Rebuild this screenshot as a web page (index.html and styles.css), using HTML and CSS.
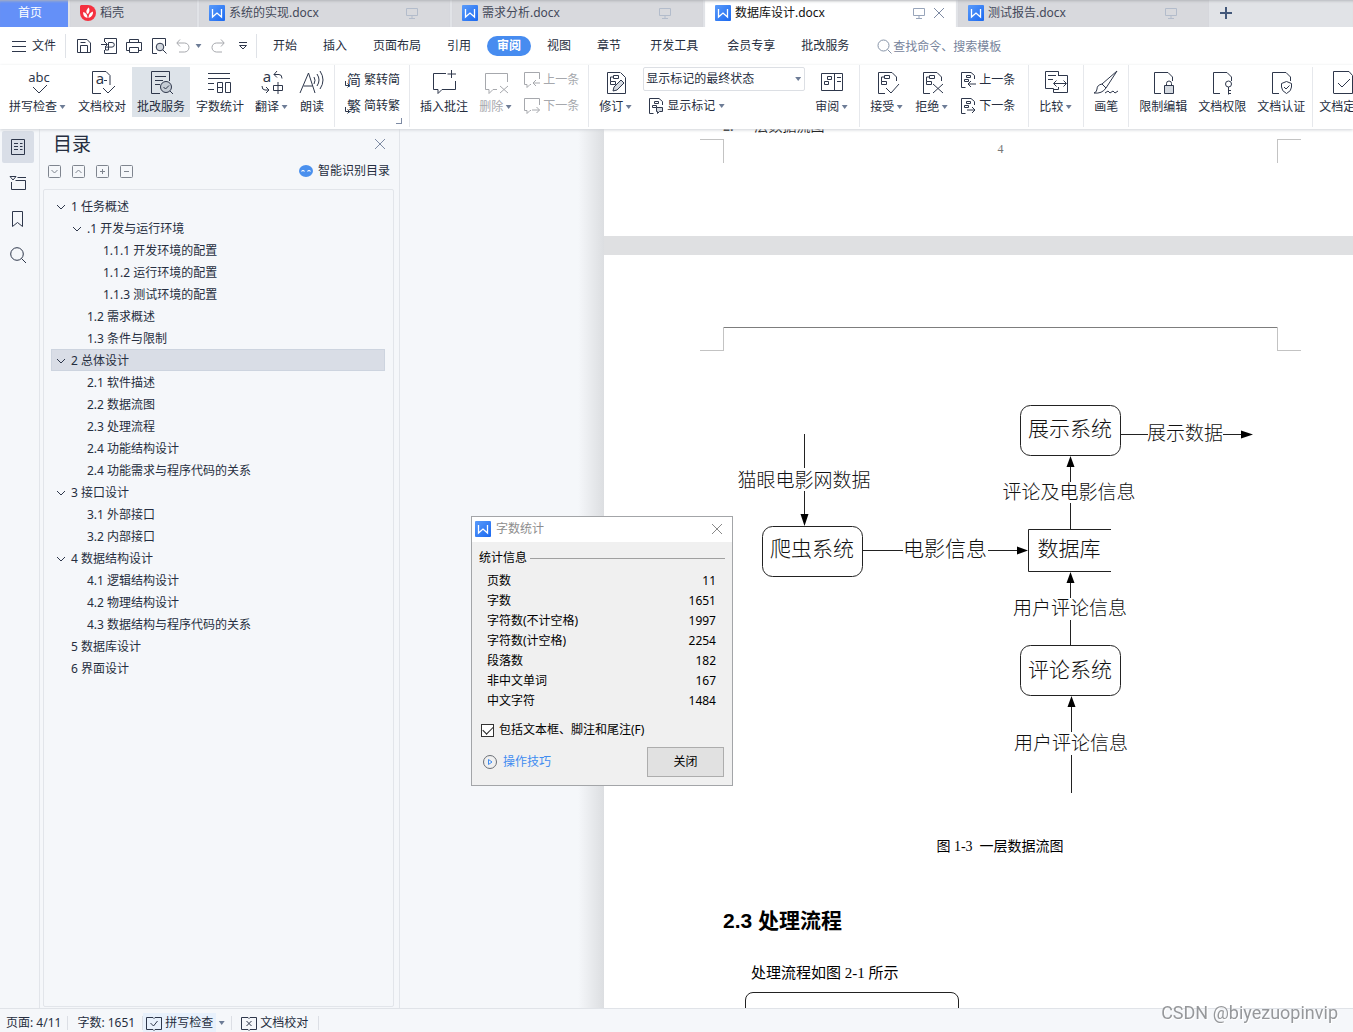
FILE: index.html
```html
<!DOCTYPE html>
<html lang="zh-CN">
<head>
<meta charset="utf-8">
<title>数据库设计.docx</title>
<link rel="stylesheet" href="styles.css">
</head>
<body>
<svg class="defs" width="0" height="0" aria-hidden="true">
  <defs>
    <linearGradient id="wg" x1="0" y1="0" x2="1" y2="1"><stop offset="0" stop-color="#5a9bfa"/><stop offset="1" stop-color="#1a68f0"/></linearGradient>
  </defs>
  <symbol id="w" viewBox="0 0 16 16"><rect width="16" height="16" rx="1" fill="url(#wg)"/><path d="M3.5 4v8l4.5-4 4.5 4V4" fill="none" stroke="#fff" stroke-width="1.3"/></symbol>
  <symbol id="screen" viewBox="0 0 12 12"><path d="M.5 1.500h11v7H.5zM6 8.500v3M3 11.500h6"/></symbol>
  <symbol id="close" viewBox="0 0 12 12"><path d="M1 1l10 10M11 1L1 11"/></symbol>
  <symbol id="page" viewBox="0 0 26 26"><path d="M11 24.500H4.500v-21H18l4.500 4.500v4"/></symbol>
  <symbol id="marks" viewBox="0 0 26 26"><path d="M10.500 6.500h5v3h-5zM7.500 12.500h5v3h-5zM10.500 8h-3v4.500"/></symbol>
  <symbol id="chev" viewBox="0 0 10 10"><path d="M1 3l4 4 4-4"/></symbol>
  <symbol id="markdoc" viewBox="0 0 16 16"><path d="M5.500 15.500h-4v-15h9.500l3.500 3v3.500M6.500 3.500h4v2h-4zM4.500 7.500h4v2h-4z"/></symbol>
  <symbol id="bubble" viewBox="0 0 16 16"><path d="M15.500 7V.5H.5v12H3v3l3-3h1"/></symbol>
</svg>

<nav class="tabs" aria-label="文档标签">
  <button class="tab home">首页</button>
  <button class="tab docer"><svg width="16" height="16" viewBox="0 0 16 16"><path d="M1 0h7a8 8 0 1 1-8 8V1z" fill="#f5303f"/><path d="M7.500 13C3.500 12 3 9 3.200 7 6 7.500 7.500 9.500 7.500 13zM7 8.500C5.500 6 7 4 8.800 2.500 10 5 9.500 7 8 9zM8.500 13c0-3.500 1.500-5.500 4.500-6.500.3 3-1.200 5.700-4.500 6.500z" fill="#fff"/></svg><span>稻壳</span></button>
  <button class="tab doc"><svg width="16" height="16"><use href="#w"/></svg><span>系统的实现.docx</span><svg class="scr" width="12" height="12"><use href="#screen"/></svg></button>
  <button class="tab doc"><svg width="16" height="16"><use href="#w"/></svg><span>需求分析.docx</span><svg class="scr" width="12" height="12"><use href="#screen"/></svg></button>
  <button class="tab doc active"><svg width="16" height="16"><use href="#w"/></svg><span>数据库设计.docx</span><svg class="scr" width="12" height="12"><use href="#screen"/></svg><svg class="x" width="12" height="12"><use href="#close"/></svg></button>
  <button class="tab doc"><svg width="16" height="16"><use href="#w"/></svg><span>测试报告.docx</span><svg class="scr" width="12" height="12"><use href="#screen"/></svg></button>
  <button class="newtab" aria-label="新建"><svg width="12" height="12" viewBox="0 0 12 12"><path d="M6 0v12M0 6h12" stroke="#43587a" stroke-width="2"/></svg></button>
</nav>

<nav class="menu" aria-label="菜单">
  <button class="file"><svg class="ic" width="14" height="12" viewBox="0 0 14 12"><path d="M0 1.500h14M0 6.500h14M0 11.500h14"/></svg>文件</button>
  <i class="vsep"></i>
  <div class="quick">
    <button aria-label="保存"><svg class="ic" width="16" height="16" viewBox="0 0 16 16"><path d="M1.500 1.500h9.500l3.500 3.500v9.500h-13zM4.500 14.500v-7h7v7M4.500 4.500h5"/></svg></button>
    <button aria-label="输出为PDF"><svg class="ic" width="16" height="16" viewBox="0 0 16 16"><path d="M3.500 4V.5h12v15h-12V12M0 6.500h6M4 4l2.500 2.500L4 9M7.500 12V4.500h3.500a2.300 2.300 0 0 1 0 4.600H4.500V12h3"/></svg></button>
    <button aria-label="打印"><svg class="ic" width="16" height="16" viewBox="0 0 16 16"><path d="M3.500 4.500v-3h9v3M3.500 12.500h-3v-8h15v8h-3M3.500 9.500h9v5h-9z"/></svg></button>
    <button aria-label="打印预览"><svg class="ic" width="16" height="16" viewBox="0 0 16 16"><path d="M6 15.500H1.500V.5h13V8M12 12l3.500 3.500"/><circle cx="9" cy="9" r="3.800" fill="#d4d9e0"/></svg></button>
    <button class="dim" aria-label="撤销"><svg class="ic" width="14" height="14" viewBox="0 0 14 14"><path d="M4 .5L.8 4 4 7.500M1 4h7.500a4.500 4.500 0 0 1 0 9H3"/></svg><b class="dd"></b></button>
    <button class="dim" aria-label="恢复"><svg class="ic" width="14" height="14" viewBox="0 0 14 14"><path d="M10 .5L13.200 4 10 7.500M13 4H5.500a4.500 4.500 0 0 0 0 9H11"/></svg></button>
    <button aria-label="更多"><svg class="ic" width="8" height="8" viewBox="0 0 8 8"><path d="M0 .5h8M.5 3.500L4 7l3.500-3.500z"/></svg></button>
  </div>
  <i class="vsep"></i>
  <div class="items">
    <button>开始</button><button>插入</button><button>页面布局</button><button>引用</button><button class="on">审阅</button><button>视图</button><button>章节</button><button class="wide">开发工具</button><button>会员专享</button><button>批改服务</button>
  </div>
  <label class="find"><svg width="15" height="15" viewBox="0 0 15 15"><circle cx="6.500" cy="6.500" r="5.500"/><path d="M10.500 10.500L14.500 14.500"/></svg><input type="text" placeholder="查找命令、搜索模板" aria-label="查找命令"></label>
</nav>

<div class="ribbon" role="toolbar" aria-label="审阅">
  <button class="big"><svg class="ic" width="26" height="26" viewBox="0 0 26 26"><text x="14" y="13" class="tabc">abc</text><path d="M8 18l6 6 8-8"/></svg><span>拼写检查<b class="dd"></b></span></button>
  <button class="big"><svg class="ic" width="26" height="26" viewBox="0 0 26 26"><path d="M12 24.500H3.500v-22H17l4 4V16M14 19l5 5 7-7M15 11.500h3"/><text x="11" y="15" class="ta">a</text></svg><span>文档校对</span></button>
  <button class="big on"><svg class="ic" width="26" height="26" viewBox="0 0 26 26"><path d="M12 24.500H3.500v-22h18V12M7 7.500h11M7 11.500h8M7 15.500h5M22 22l3 3"/><circle cx="18" cy="18" r="5.500" fill="#c5ccd5"/><path d="M15.500 18l2 2 3.500-3.500"/></svg><span>批改服务</span></button>
  <button class="big"><svg class="ic" width="26" height="26" viewBox="0 0 26 26"><path d="M1 4.500h22M1 9.500h22M1 14.500h6M1 20.500h6M10.500 13.500h5v10h-5zM10.500 18.500h5M18.500 13.500h5v10h-5z"/></svg><span>字数统计</span></button>
  <button class="big"><svg class="ic" width="26" height="26" viewBox="0 0 26 26"><text x="8" y="13" class="ta">a</text><path d="M18 2l-3 3.500 3 3M15 5.500h5q3 0 3 4M7 18l3 3-3 3M10 21H6q-3 0-3-4M14.500 16.500h9v5h-9zM19 13v12"/></svg><span>翻译<b class="dd"></b></span></button>
  <button class="big"><svg class="ic" width="26" height="26" viewBox="0 0 26 26"><path d="M1 24L9.500 4 16 24M4.500 17h9M15 8q2 3 0 7M18 5q4 6 0 12M21 2q6 9 0 18"/></svg><span>朗读</span></button>
  <i class="gsep"></i>
  <div class="pair">
    <button><svg class="ic" width="16" height="16" viewBox="0 0 16 16"><text x="9" y="13" class="tz">简</text><path d="M.5 9v4.500h4M2.500 11.500l2 2-2 2"/></svg>繁转简</button>
    <button><svg class="ic" width="16" height="16" viewBox="0 0 16 16"><text x="9" y="13" class="tz">繁</text><path d="M.5 9v4.500h4M2.500 11.500l2 2-2 2"/></svg>简转繁</button>
  </div>
  <i class="gsep corner"></i>
  <button class="big"><svg class="ic" width="26" height="26" viewBox="0 0 26 26"><path d="M15 4.500H2.500v16H7v4l4-4h13.500V12M20.500 1v8M16.500 5h8.500"/></svg><span>插入批注</span></button>
  <button class="big dim"><svg class="ic" width="26" height="26" viewBox="0 0 26 26"><path d="M24.500 13V4.500H2.500v16H6v4l4-4h4M17 17l8 7M25 17l-8 7"/></svg><span>删除<b class="dd"></b></span></button>
  <div class="pair dim">
    <button><svg class="ic" width="16" height="16" viewBox="0 0 16 16"><use href="#bubble"/><path d="M16 11H9M12 8l-3 3 3 3"/></svg>上一条</button>
    <button><svg class="ic" width="16" height="16" viewBox="0 0 16 16"><use href="#bubble"/><path d="M8 12h7.500M12.500 9l3 3-3 3"/></svg>下一条</button>
  </div>
  <i class="gsep"></i>
  <button class="big"><svg class="ic" width="26" height="26" viewBox="0 0 26 26"><path d="M17 3.500H4.500v21h18V8.500l-5-5"/><use href="#marks"/><path d="M10 22l1-4 7-7 3 3-7 7z" fill="#d4d9e0"/></svg><span>修订<b class="dd"></b></span></button>
  <div class="marks">
    <select aria-label="显示状态"><option>显示标记的最终状态</option></select>
    <button><svg class="ic" width="16" height="16" viewBox="0 0 16 16"><use href="#markdoc"/><path d="M8.500 9.500h6v4h-3l-2 2v-2h-1z" fill="#d4d9e0"/></svg>显示标记<b class="dd"></b></button>
  </div>
  <button class="big"><svg class="ic" width="26" height="26" viewBox="0 0 26 26"><path d="M2.500 4.500h21v17h-21zM15.500 4.500v17M18 8.500h4M18 12.500h4M8.500 7.500h4v3h-4zM5.500 12.500h4v3h-4z"/></svg><span>审阅<b class="dd"></b></span></button>
  <i class="gsep"></i>
  <button class="big"><svg class="ic" width="26" height="26" viewBox="0 0 26 26"><use href="#page"/><use href="#marks"/><path d="M12 19l5 5 8-9"/></svg><span>接受<b class="dd"></b></span></button>
  <button class="big"><svg class="ic" width="26" height="26" viewBox="0 0 26 26"><use href="#page"/><use href="#marks"/><path d="M14 15l10 9M24 15l-10 9"/></svg><span>拒绝<b class="dd"></b></span></button>
  <div class="pair roomy">
    <button><svg class="ic" width="16" height="16" viewBox="0 0 16 16"><use href="#markdoc"/><path d="M16 12H8M11 9l-3 3 3 3"/></svg>上一条</button>
    <button><svg class="ic" width="16" height="16" viewBox="0 0 16 16"><use href="#markdoc"/><path d="M7 12h8M12 9l3 3-3 3"/></svg>下一条</button>
  </div>
  <i class="gsep"></i>
  <button class="big"><svg class="ic" width="26" height="26" viewBox="0 0 26 26"><path d="M15.500 7V2.500h-13v17h8v4h14v-17h-9M5 6.500h8M5 10.500h5M11 14.500h12M13.500 11.500l-3 3 3 3M20.500 11.500l3 3-3 3M15.500 18v2.500h-5"/></svg><span>比较<b class="dd"></b></span></button>
  <i class="gsep"></i>
  <button class="big"><svg class="ic" width="26" height="26" viewBox="0 0 26 26"><path d="M24 2L9 15l4 4zM9 15q-5 1-5 5 0 3-3 4 8 1 12-5M12 24l3-2 2 2 3-2 2 2 3-2"/></svg><span>画笔</span></button>
  <i class="gsep"></i>
  <button class="big"><svg class="ic" width="26" height="26" viewBox="0 0 26 26"><use href="#page"/><path d="M14.500 16.500h9v8h-9z" fill="#d4d9e0"/><path d="M16.500 16.500v-2a2.500 2.500 0 0 1 5 0v2"/></svg><span>限制编辑</span></button>
  <button class="big"><svg class="ic" width="26" height="26" viewBox="0 0 26 26"><use href="#page"/><circle cx="19.500" cy="15" r="3"/><path d="M19.500 18V25.500M19.500 21.500H22M19.500 24.500H22"/></svg><span>文档权限</span></button>
  <button class="big"><svg class="ic" width="26" height="26" viewBox="0 0 26 26"><use href="#page"/><path d="M18.500 12.500l5 2V18q0 4-5 6.500-5-2.500-5-6.500v-3.500zM16 18l2 2 3.500-3.500"/></svg><span>文档认证</span></button>
  <i class="gsep tight"></i>
  <button class="big"><svg class="ic" width="26" height="26" viewBox="0 0 26 26"><path d="M4 24.500h18.500v-18l-3.500-4H3.500v22M8 14l4 4 8-8"/></svg><span>文档定稿</span></button>
</div>

<main class="work">
  <aside class="rail">
    <button class="on" aria-label="目录"><svg class="ic" width="16" height="16" viewBox="0 0 16 16"><path d="M1.500.5h13v15h-13zM4 4.500h4M10 4.500h2.500M4 7.500h4M10 7.500h2.500M4 10.500h4M10 10.500h2.500"/></svg></button>
    <button aria-label="章节"><svg class="ic" width="16" height="16" viewBox="0 0 16 16"><path d="M0 1.500h6L3 5zM7.500 2.500H16M1.500 7v7.500h14v-9h-10"/></svg></button>
    <button aria-label="书签"><svg class="ic" width="16" height="16" viewBox="0 0 16 16"><path d="M2.500.5h10v15l-5-4-5 4z"/></svg></button>
    <button aria-label="查找"><svg class="ic" width="16" height="16" viewBox="0 0 16 16"><circle cx="7" cy="7" r="6.300"/><path d="M11.500 11.500L16 16"/></svg></button>
  </aside>
  <section class="outline">
    <header><h2>目录</h2><button aria-label="关闭"><svg class="x" width="12" height="12"><use href="#close"/></svg></button></header>
    <div class="tools">
      <button aria-label="展开"><svg width="13" height="13" viewBox="0 0 13 13"><rect x=".5" y=".5" width="12" height="12" rx="1"/><path d="M3.500 5l3 3 3-3"/></svg></button>
      <button aria-label="收起"><svg width="13" height="13" viewBox="0 0 13 13"><rect x=".5" y=".5" width="12" height="12" rx="1"/><path d="M3.500 8l3-3 3 3"/></svg></button>
      <button aria-label="增加级别"><svg width="13" height="13" viewBox="0 0 13 13"><rect x=".5" y=".5" width="12" height="12" rx="1"/><path d="M4 6.500h5M6.500 4v5"/></svg></button>
      <button aria-label="减少级别"><svg width="13" height="13" viewBox="0 0 13 13"><rect x=".5" y=".5" width="12" height="12" rx="1"/><path d="M4 6.500h5"/></svg></button>
      <a href="#toc" class="smart"><svg width="14" height="12" viewBox="0 0 14 12"><ellipse cx="7" cy="6" rx="7" ry="6" fill="#4a90ee"/><path d="M2.500 6.500q1.500-2 3 0M8.500 6.500q1.500-2 3 0" stroke="#fff" stroke-width="1.200" fill="none"/></svg>智能识别目录</a>
    </div>
    <ul class="tree" id="toc">
      <li><svg class="ic" width="10" height="10"><use href="#chev"/></svg>1 任务概述</li>
      <li class="l2"><svg class="ic" width="10" height="10"><use href="#chev"/></svg>.1 开发与运行环境</li>
      <li class="l3 leaf">1.1.1 开发环境的配置</li>
      <li class="l3 leaf">1.1.2 运行环境的配置</li>
      <li class="l3 leaf">1.1.3 测试环境的配置</li>
      <li class="l2 leaf">1.2 需求概述</li>
      <li class="l2 leaf">1.3 条件与限制</li>
      <li class="sel"><svg class="ic" width="10" height="10"><use href="#chev"/></svg>2 总体设计</li>
      <li class="l2 leaf">2.1 软件描述</li>
      <li class="l2 leaf">2.2 数据流图</li>
      <li class="l2 leaf">2.3 处理流程</li>
      <li class="l2 leaf">2.4 功能结构设计</li>
      <li class="l2 leaf">2.4 功能需求与程序代码的关系</li>
      <li><svg class="ic" width="10" height="10"><use href="#chev"/></svg>3 接口设计</li>
      <li class="l2 leaf">3.1 外部接口</li>
      <li class="l2 leaf">3.2 内部接口</li>
      <li><svg class="ic" width="10" height="10"><use href="#chev"/></svg>4 数据结构设计</li>
      <li class="l2 leaf">4.1 逻辑结构设计</li>
      <li class="l2 leaf">4.2 物理结构设计</li>
      <li class="l2 leaf">4.3 数据结构与程序代码的关系</li>
      <li class="leaf">5 数据库设计</li>
      <li class="leaf">6 界面设计</li>
    </ul>
  </section>

  <section class="canvas">
    <article class="sheet prev">
      <p class="tail"><strong>2.</strong>  一层数据流图</p>
      <div class="crops foot"><i></i><span>4</span><i></i></div>
    </article>
    <article class="sheet cur">
      <div class="crops head"><i></i><span></span><i></i></div>
      <svg class="flow" width="554" height="400" viewBox="724 400 554 400">
        <g class="shape">
          <rect x="1020.500" y="405.500" width="100" height="50" rx="10"/>
          <rect x="762.500" y="526.500" width="100" height="50" rx="10"/>
          <rect x="1020.500" y="645.500" width="100" height="50" rx="10"/>
          <path d="M1111 529.500h-82.500v42h82.500"/>
          <path d="M804.500 434v34M804.500 491v26M863 550.500h40M988 550.500h32M1070.500 529v-26M1070.500 482v-18M1121 434.500h27M1223 434.500h20M1070.500 645v-25M1070.500 598v-18M1071.500 793v-38M1071.500 732v-28"/>
        </g>
        <path d="M804.500 526l-4-12h8zM1028 550.500l-11-4v8zM1070.500 456l-4 11h8zM1253 434.500l-12-4v8zM1070.500 572l-4 11h8zM1071.500 696l-4 11h8z"/>
        <g class="node"><text x="1070" y="436">展示系统</text><text x="812" y="556">爬虫系统</text><text x="1070" y="677">评论系统</text><text x="1069" y="556">数据库</text><text x="945" y="556">电影信息</text></g>
        <g class="edge"><text x="804" y="487">猫眼电影网数据</text><text x="1069" y="499">评论及电影信息</text><text x="1185" y="440">展示数据</text><text x="1070" y="615">用户评论信息</text><text x="1071" y="750">用户评论信息</text></g>
      </svg>
      <p class="caption">图 1-3&nbsp; 一层数据流图</p>
      <h3>2.3 处理流程</h3>
      <p class="para">处理流程如图 2-1 所示</p>
      <div class="chartbox"></div>
    </article>
  </section>
</main>

<footer class="status">
  <span>页面: 4/11</span><i></i><span>字数: 1651</span><i class="flush"></i>
  <button class="on"><svg class="ic" width="16" height="16" viewBox="0 0 16 16"><path d="M7 2.500H.5v12H7l1 1 1-1h6.500v-12H9l-1 1zM4.500 8l3 3 4-5"/></svg>拼写检查</button><b class="dd"></b><i></i>
  <button><svg class="ic" width="16" height="16" viewBox="0 0 16 16"><path d="M7 2.500H.5v12H7l1 1 1-1h6.500v-12H9l-1 1zM5.500 6l5 5M10.500 6l-5 5"/></svg>文档校对</button><i></i>
</footer>

<div class="dialog" role="dialog" aria-label="字数统计">
  <header><svg width="16" height="16"><use href="#w"/></svg><span>字数统计</span><button aria-label="关闭窗口"><svg class="x" width="12" height="12"><use href="#close"/></svg></button></header>
  <div class="legend">统计信息</div>
  <table>
    <tr><th scope="row">页数</th><td>11</td></tr>
    <tr><th scope="row">字数</th><td>1651</td></tr>
    <tr><th scope="row">字符数(不计空格)</th><td>1997</td></tr>
    <tr><th scope="row">字符数(计空格)</th><td>2254</td></tr>
    <tr><th scope="row">段落数</th><td>182</td></tr>
    <tr><th scope="row">非中文单词</th><td>167</td></tr>
    <tr><th scope="row">中文字符</th><td>1484</td></tr>
  </table>
  <label class="check"><input type="checkbox" checked>包括文本框、脚注和尾注(F)</label>
  <div class="foot"><a href="#tips"><svg width="14" height="14" viewBox="0 0 14 14"><circle cx="7" cy="7" r="6.500" fill="none" stroke="#6b6f76"/><path d="M5.500 4.500v5l3.500-2.500z" fill="none" stroke="#3f8cf0"/></svg>操作技巧</a><button>关闭</button></div>
</div>
<div class="mark">CSDN @biyezuopinvip</div>
</body>
</html>
```

FILE: styles.css
```css
* { box-sizing: border-box; }
body {
  margin: 0; height: 100vh; overflow: hidden;
  display: flex; flex-direction: column;
  background: #f5f7fa; color: #262e40;
  font: 12px/16px "Noto Sans", "Noto Sans CJK SC", sans-serif;
}
button { font: inherit; color: inherit; border: 0; padding: 0; background: none; display: flex; align-items: center; white-space: nowrap; }
a { color: inherit; text-decoration: none; }
h2, h3, p, ul { margin: 0; padding: 0; font-weight: 400; }
svg { display: block; flex: none; }
.defs { position: absolute; }
.ic { fill: none; stroke: #2e374b; stroke-width: 1; overflow: visible; }
.ic text { fill: #2e374b; stroke: none; text-anchor: middle; }
.tabc { font-size: 13px; }
.ta { font-size: 15px; }
.tz { font-size: 14px; }
.dd { flex: none; width: 7px; height: 4px; margin-left: 2px; background: #6d7c96; clip-path: polygon(8% 0, 92% 0, 50% 100%); }
.dim { color: #a6a8ad; }
.dim .ic { stroke: #a6a8ad; }

/* document tabs */
.tabs { flex: none; display: flex; gap: 2px; height: 27px; background: #e1e3e7; box-shadow: inset 0 3px 3px -2px #b5b7bb; }
.tab { height: 27px; padding: 0 0 1px 10px; background: #d8d9dd; color: #44495a; box-shadow: inset 0 3px 3px -2px #b0b2b6; }
.tab span { margin-left: 4px; }
.home { width: 68px; padding: 0 8px 1px 0; justify-content: center; background: #6490f8; color: #fff; }
.docer { width: 127px; }
.doc { width: 251px; }
.active { background: #fff; color: #111; }
.scr, .x { fill: none; stroke: #b3bccb; }
.x { stroke: #7d8aa3; }
.tab .scr { margin: 0 32px 0 auto; }
.active .scr { margin-right: 8px; stroke: #98a5ba; }
.active .x { margin-right: 11px; }
.newtab { padding: 0 0 2px 9px; }

/* menu row */
.menu { flex: none; display: flex; align-items: center; height: 38px; background: #fff; padding-left: 12px; }
.file { gap: 6px; }
.vsep { width: 1px; height: 24px; background: #dfe2e7; margin-left: 9px; }
.quick { display: flex; align-items: center; gap: 9px; margin-left: 10px; }
.quick button:nth-child(6) { margin-right: 5px; }
.quick .dd { margin-left: 5px; }
.items { display: flex; gap: 6px; margin-left: 6px; }
.items button { height: 20px; padding: 0 10px; border-radius: 10px; }
.items .wide { margin: 0 3px; }
.items .on { background: #478cf0; color: #fff; font-weight: 700; }
.find { display: flex; align-items: center; gap: 1px; margin-left: 18px; }
.find svg { fill: none; stroke: #8794a8; }
.find input { width: 140px; height: 18px; padding: 0; border: 0; font: inherit; background: none; }
.find input::placeholder { color: #76839b; opacity: 1; }

/* ribbon */
.ribbon { flex: none; position: relative; z-index: 1; display: flex; height: 64px; padding: 2px 0 0 4px; background: #fff; box-shadow: 0 1px 3px #cfd2d7; overflow-x: clip; }
.big { flex: none; flex-direction: column; gap: 4px; height: 50px; padding: 2px 5px; margin-right: 1px; }
.big .ic { margin: 0 -1px; }
.big span { display: flex; align-items: center; }
.big .dd { margin-right: 1px; }
.ribbon > .on { background: #dde3e9; }
.gsep { flex: none; width: 1px; height: 62px; background: #e6e8ec; margin: -2px 5px 0 4px; }
.tight { margin: 0 1px; height: 60px; }
.corner { position: relative; }
.corner::before { content: ""; position: absolute; right: 8px; bottom: 3px; width: 5px; height: 5px; border: solid #7d8aa3; border-width: 0 1px 1px 0; }
.pair { flex: none; display: flex; flex-direction: column; gap: 10px; padding: 5px 4px 0 5px; margin-right: 1px; }
.pair button { gap: 3px; }
.roomy { padding-right: 8px; }
.marks { flex: none; width: 162px; margin: 0 5px 0 4px; display: grid; justify-items: start; align-content: start; gap: 7px; }
.marks select { grid-area: 1 / 1; width: 162px; height: 24px; padding: 0 0 0 2px; border: 1px solid #dcdfe4; border-radius: 2px; font: inherit; color: inherit; appearance: none; background: #fff; }
.marks::after { content: ""; grid-area: 1 / 1; align-self: center; justify-self: end; margin-right: 4px; width: 6px; height: 4px; background: #6d7c96; clip-path: polygon(0 0, 100% 0, 50% 100%); }
.marks button { gap: 3px; padding-left: 5px; }
.marks .dd { margin-left: 0; }

/* work area */
.work { flex: 1; min-height: 0; display: flex; }
.rail { flex: none; width: 40px; border-right: 1px solid #e2e5ea; padding: 2px; display: flex; flex-direction: column; gap: 4px; }
.rail button { width: 32px; height: 32px; justify-content: center; border-radius: 2px; }
.rail .on { background: #d9dee7; }
.outline { flex: none; width: 360px; border-right: 1px solid #e2e5ea; padding: 1px 5px 1px 3px; display: flex; flex-direction: column; }
.outline header { display: flex; align-items: center; justify-content: space-between; height: 28px; padding: 0 8px 0 10px; }
.outline h2 { font-size: 19px; line-height: 26px; }
.tools { display: flex; align-items: center; gap: 11px; height: 26px; padding: 0 4px 0 5px; }
.tools button svg { fill: none; stroke: #7f858f; }
.smart { display: flex; align-items: center; gap: 5px; margin-left: auto; }
.tree { flex: 1; margin-top: 5px; padding: 5px 8px 0 7px; border: 1px solid #e2e5ea; border-radius: 2px; list-style: none; overflow: hidden; }
.tree li { display: flex; align-items: center; gap: 5px; height: 22px; padding: 1px 0 0 5px; }
.tree .leaf { padding-left: 20px; }
.tree .l2 { padding-left: 21px; }
.tree .l2.leaf { padding-left: 36px; }
.tree .l3.leaf { padding-left: 52px; }
.tree .sel { background: #d9dde6; box-shadow: inset 0 0 0 1px #cdd4df; }

/* pages */
.canvas { flex: 1; min-width: 0; overflow: hidden; padding-left: 204px; background: linear-gradient(to right, #f5f7fa 178px, #dcdee1 204px, #dfe0e2 204px); display: flex; flex-direction: column; gap: 19px; }
.sheet { flex: none; width: 794px; background: #fff; color: #000; }
.prev { height: 107px; }
.tail { height: 4px; padding-left: 119px; font: 14px/12px "Liberation Serif", "Noto Sans CJK SC", serif; display: flex; align-items: flex-end; white-space: pre; }
.crops { display: flex; justify-content: space-between; padding: 0 97px 0 96px; }
.crops i { width: 24px; height: 24px; border: solid #c3c3c3; border-width: 1px 1px 0 0; }
.crops i:last-child { border-width: 1px 0 0 1px; }
.crops span { flex: 1; text-align: center; }
.foot.crops { margin-top: 6px; color: #777; font: 12px/20px "Liberation Serif", serif; }
.head { padding-top: 72px; }
.head i { border-width: 0 1px 1px 0; }
.head i:last-child { border-width: 0 0 1px 1px; }
.head span { border-top: 1px solid #7d7d7d; }
.flow { margin: 49px 0 0 120px; font-family: "Noto Sans CJK SC", sans-serif; font-weight: 300; }
.flow text { text-anchor: middle; fill: #111; }
.shape { fill: none; stroke: #222; }
.node { font-size: 21px; }
.edge { font-size: 19px; }
.caption { margin-top: 37px; padding-right: 2px; text-align: center; font: 14px/20px "Liberation Serif", "Noto Sans CJK SC", serif; }
.sheet h3 { margin: 50px 0 0 119px; font: 700 21px/28px "Liberation Sans", "Noto Sans CJK SC", sans-serif; }
.para { margin: 28px 0 0 147px; font: 15px/20px "Liberation Serif", "Noto Sans CJK SC", serif; }
.chartbox { margin: 9px 0 0 141px; width: 214px; height: 60px; border: 1px solid #222; border-radius: 8px; }

/* status bar */
.status { flex: none; display: flex; align-items: center; height: 24px; padding: 5px 0 0 6px; border-top: 1px solid #e0e3e8; background: #f5f7fa; z-index: 1; }
.status i { width: 1px; height: 14px; margin: 0 9px 0 6px; background: #dcdfe5; }
.status .flush { margin: 0 0 0 7px; }
.status button { gap: 3px; height: 20px; padding-right: 4px; }
.status .on { padding: 0 3px; background: #e8f1fc; }

/* word count window */
.dialog { position: fixed; left: 471px; top: 516px; width: 262px; z-index: 2; border: 1px solid #a3a5a8; background: #f0f0f0; color: #000; padding-bottom: 8px; }
.dialog header { display: flex; align-items: center; height: 25px; padding: 0 9px 1px 3px; background: #fff; color: #8d8d8d; }
.dialog header span { flex: 1; margin-left: 5px; }
.dialog .x { stroke: #888; }
.legend { display: flex; align-items: center; gap: 3px; margin: 8px 7px 0 7px; }
.legend::after { content: ""; flex: 1; height: 1px; background: #a0a0a0; }
.dialog table { width: 229px; margin: 5px 0 0 15px; border-collapse: collapse; }
.dialog th, .dialog td { height: 20px; padding: 0; font-weight: 400; text-align: left; }
.dialog td { text-align: right; }
.check { display: flex; align-items: center; gap: 5px; margin: 11px 0 0 9px; }
.check input { appearance: none; width: 13px; height: 13px; margin: 0; border: 1px solid #333; background: #fff; display: grid; place-items: center; }
.check input:checked::before { content: ""; width: 9px; height: 5px; border: solid #222; border-width: 0 0 1px 1px; transform: translateY(-1px) rotate(-45deg); }
.dialog .foot { display: flex; align-items: center; justify-content: space-between; margin: 9px 8px 0 11px; }
.dialog .foot a { display: flex; align-items: center; gap: 6px; color: #3f8cf0; }
.dialog .foot button { width: 77px; height: 30px; justify-content: center; background: #e1e1e1; border: 1px solid #adadad; }

.mark { position: fixed; right: 15px; bottom: 8px; z-index: 3; font: 18px/22px Roboto, sans-serif; color: #96989b; text-shadow: 1px 1px 0 #fff; }
```
